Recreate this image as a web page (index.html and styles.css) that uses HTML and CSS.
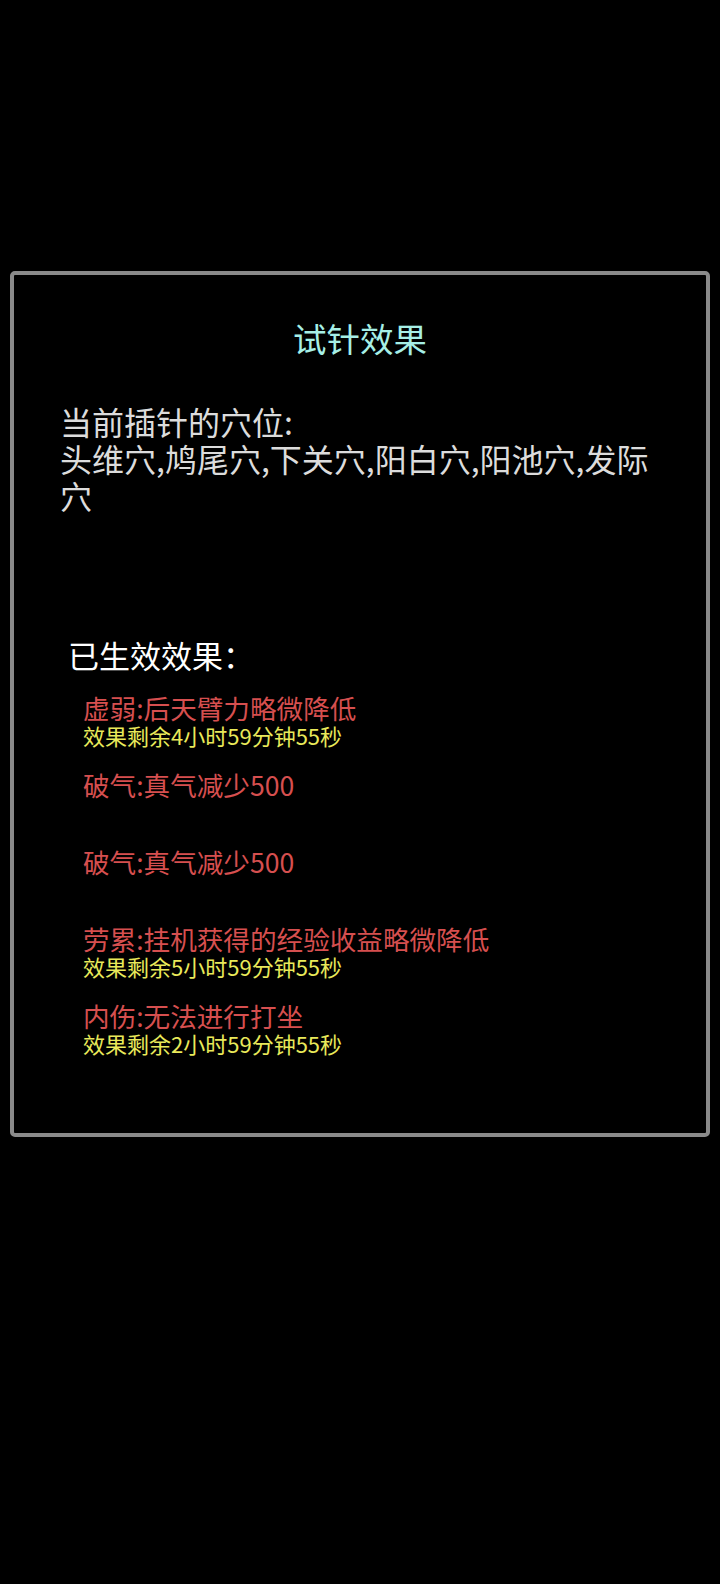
FILE: index.html
```html
<!DOCTYPE html>
<html>
  <head>
    <meta charset="utf-8">
    <link rel="stylesheet" href="styles.css">
  </head>
  <body>
    <div class="panel">
      <h1 class="title">试针效果</h1>

      <div class="points">
        当前插针的穴位:<br>
        头维穴,鸠尾穴,下关穴,阳白穴,阳池穴,发际穴
      </div>

      <div class="effects">
        <h2>已生效效果：</h2>

        <div class="effect">
          <div class="name">虚弱:后天臂力略微降低</div>
          <div class="timer">效果剩余4小时59分钟55秒</div>
        </div>
        <div class="effect">
          <div class="name">破气:真气减少500</div>
        </div>
        <div class="effect">
          <div class="name">破气:真气减少500</div>
        </div>
        <div class="effect">
          <div class="name">劳累:挂机获得的经验收益略微降低</div>
          <div class="timer">效果剩余5小时59分钟55秒</div>
        </div>
        <div class="effect">
          <div class="name">内伤:无法进行打坐</div>
          <div class="timer">效果剩余2小时59分钟55秒</div>
        </div>
      </div>
    </div>
  </body>
</html>
```

FILE: styles.css
```css
html, body {
  margin: 0;
  background: #000;
}
body {
  padding: 271px 0 0 10px;
  font-family: "Noto Sans CJK SC", "Noto Sans", sans-serif;
}
.panel {
  box-sizing: border-box;
  width: 700px;
  height: 866px;
  border: 4px solid #8a8a8a;
  border-radius: 5px;
  background: #000;
  overflow: hidden;
}
.title {
  margin: 44px 0 0;
  font-size: 33.5px;
  font-weight: 400;
  line-height: 38px;
  text-align: center;
  color: #a6efe6;
}
.points {
  margin: 46px 0 0 46px;
  width: 610px;
  font-size: 32px;
  line-height: 37px;
  color: #dcdcdc;
}
.effects {
  margin: 122px 0 0 54px;
}
.effects h2 {
  margin: 0 0 19px;
  font-size: 31px;
  font-weight: 400;
  line-height: 38px;
  color: #fff;
}
.effect {
  height: 77px;
  padding-left: 15px;
}
.name {
  font-size: 26.6px;
  line-height: 30px;
  color: #d64f4f;
}
.timer {
  font-size: 22px;
  line-height: 25px;
  color: #e9e95a;
}
```
